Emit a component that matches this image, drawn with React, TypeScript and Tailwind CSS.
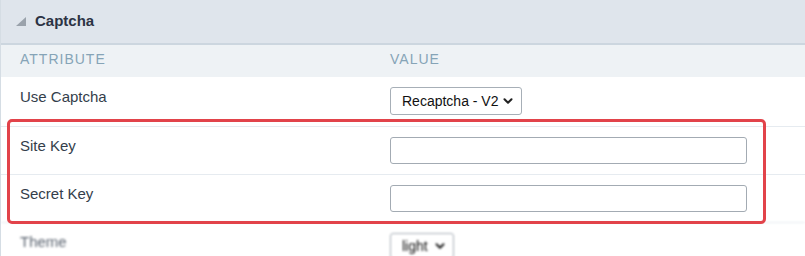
import { ChevronDown } from "lucide-react";

const font = { fontFamily: '"Liberation Sans", Arial, sans-serif' };

function SelectBox({ label, className }: { label: string; className?: string }) {
  return (
    <div
      className={
        "flex items-center justify-between rounded-[3px] border border-[#a7afb7] bg-white pl-[11px] pr-[6px] text-[14px] text-[#111]" +
        " " +
        (className ?? "")
      }
    >
      <span>{label}</span>
      <ChevronDown className="h-[14px] w-[14px] text-[#222]" strokeWidth={3.5} />
    </div>
  );
}

function TextBox() {
  return <div className="h-[27px] w-[357px] rounded-[3px] border border-[#a3abb3] bg-white" />;
}

export default function App() {
  return (
    <div className="relative h-[256px] w-[805px] overflow-hidden bg-white" style={font}>
      <div className="border-l border-[#d5dde4]">
        {/* Section title */}
        <div className="flex h-[45px] items-center gap-[9px] border-b-2 border-[#ccd6df] bg-[#dfe5ec] pl-[15px]">
          <svg width="10" height="9" viewBox="0 0 10 9" className="mt-[-1px]">
            <polygon points="10,0 10,9 0,9" fill="#9aa2ab" />
          </svg>
          <span className="text-[15px] font-bold text-[#2c3344]">Captcha</span>
        </div>

        {/* Column header */}
        <div className="grid h-[32px] grid-cols-[389px_1fr] items-center bg-[#eef2f5] pb-[3px] text-[14px] tracking-[1px] text-[#86a4b7]">
          <span className="pl-[19px]">ATTRIBUTE</span>
          <span>VALUE</span>
        </div>

        {/* Rows */}
        <div className="grid grid-cols-[389px_1fr] items-start pt-[10px] pb-[11px] text-[15px] text-[#343e4b]">
          <span className="mt-[-1px] pl-[19px]">Use Captcha</span>
          <SelectBox label="Recaptcha - V2" className="h-[28px] w-[132px]" />
        </div>
        <div className="grid grid-cols-[389px_1fr] items-start border-t border-[#e6ebf0] pt-[10px] pb-[10px] text-[15px] text-[#343e4b]">
          <span className="mt-[-2px] pl-[19px]">Site Key</span>
          <TextBox />
        </div>
        <div className="grid grid-cols-[389px_1fr] items-start border-t border-[#e6ebf0] pt-[10px] pb-[10px] text-[15px] text-[#343e4b]">
          <span className="mt-[-2px] pl-[19px]">Secret Key</span>
          <TextBox />
        </div>
        <div className="grid grid-cols-[389px_1fr] items-start border-t border-[#e6ebf0] pt-[10px] pb-[11px] text-[15px] text-[#5b6470] blur-[1px]">
          <span className="mt-[-2px] pl-[19px]">Theme</span>
          <SelectBox label="light" className="h-[26px] w-[64px] pl-[7px] text-[13px]" />
        </div>
      </div>

      {/* Highlight annotation */}
      <div className="pointer-events-none absolute left-[7px] top-[119px] h-[105px] w-[759px] rounded-[5px] border-[3px] border-[#e2434a]" />
    </div>
  );
}
